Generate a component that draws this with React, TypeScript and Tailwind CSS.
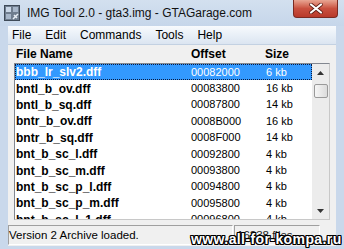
import React from "react";

const rows: [string, string, string][] = [
  ["bbb_lr_slv2.dff", "00082000", "6 kb"],
  ["bntl_b_ov.dff", "00083800", "16 kb"],
  ["bntl_b_sq.dff", "00087800", "14 kb"],
  ["bntr_b_ov.dff", "0008B000", "16 kb"],
  ["bntr_b_sq.dff", "0008F000", "14 kb"],
  ["bnt_b_sc_l.dff", "00092800", "4 kb"],
  ["bnt_b_sc_m.dff", "00093800", "4 kb"],
  ["bnt_b_sc_p_l.dff", "00094800", "4 kb"],
  ["bnt_b_sc_p_m.dff", "00095800", "4 kb"],
  ["bnt_b_sc_l_1.dff", "00096800", "4 kb"],
];

function AppIcon() {
  return (
    <svg width="16" height="16" viewBox="0 0 16 16">
      <rect x="0.5" y="0.5" width="15" height="15" fill="#6f7d8e" stroke="#3f4a58" />
      <rect x="2" y="2" width="5" height="5" fill="#c9d6e6" />
      <rect x="9" y="2" width="5" height="5" fill="#a7b6c9" />
      <rect x="2" y="9" width="5" height="5" fill="#a7b6c9" />
      <path d="M9 14 L14 9 M10 10 L13 13" stroke="#e8eef6" strokeWidth="1.5" />
    </svg>
  );
}

export default function App() {
  return (
    <div className="relative w-[344px] h-[249px] overflow-hidden bg-[#c9d8eb] font-['Liberation_Sans',Arial,sans-serif] text-black flex flex-col">
      {/* Title bar */}
      <div className="h-[26px] flex items-start shrink-0 bg-gradient-to-b from-[#d3e0ef] to-[#c6d6ea]">
        <div className="ml-[4px] mt-[5px]">
          <AppIcon />
        </div>
        <div className="ml-[7px] mt-[6px] text-[12px] leading-[14px] text-[#111] whitespace-nowrap">
          IMG Tool 2.0 - gta3.img - GTAGarage.com
        </div>
        <div className="ml-auto mr-[6px] w-[45px] h-[18px] rounded-b-[4px] border border-t-0 border-[#7a2a22] bg-gradient-to-b from-[#e8a593] via-[#c9503f] to-[#b8392a] flex items-center justify-center">
          <svg width="14" height="11" viewBox="0 0 14 11">
            <path d="M2 1.5 L12 9.5 M12 1.5 L2 9.5" stroke="#5a1a12" strokeWidth="3.6" strokeLinecap="round" />
            <path d="M2 1.5 L12 9.5 M12 1.5 L2 9.5" stroke="#ffffff" strokeWidth="2.2" strokeLinecap="round" />
          </svg>
        </div>
      </div>

      <div className="flex-1 mx-[8px] flex flex-col">
        {/* Menu bar */}
        <div className="h-[19px] shrink-0 flex items-center pl-[4px] gap-[14px] text-[12px] bg-gradient-to-b from-[#f7fafd] to-[#dbe5f1] border-b border-[#c3d1e2]">
          <span>File</span>
          <span>Edit</span>
          <span>Commands</span>
          <span>Tools</span>
          <span>Help</span>
        </div>

        {/* Client */}
        <div className="flex-1 bg-[#f0f0f0] flex flex-col">
          {/* Header */}
          <div className="h-[18px] shrink-0 flex items-center text-[12px] font-bold pl-[8px]">
            <span className="w-[175px]">File Name</span>
            <span className="w-[74px]">Offset</span>
            <span>Size</span>
          </div>

          {/* List */}
          <div className="mx-[6px] h-[157px] shrink-0 bg-white border border-t-[#828790] border-l-[#828790] border-r-[#c8c8c8] border-b-[#c8c8c8] flex overflow-hidden">
            <div className="flex-1 flex flex-col overflow-hidden">
              {rows.map(([n, o, s], i) => (
                <div
                  key={n}
                  className={
                    i === 0
                      ? "h-[16.4px] shrink-0 flex items-center pl-[1px] bg-[#3399ff] text-white outline-1 outline-dotted outline-[#0a1a40] -outline-offset-1"
                      : "h-[16.4px] shrink-0 flex items-center pl-[1px]"
                  }
                >
                  <span className="w-[175px] text-[12px] font-bold leading-[14px] whitespace-nowrap">{n}</span>
                  <span className="w-[75px] text-[11px] leading-[13px]">{o}</span>
                  <span className="text-[11px] leading-[13px] whitespace-nowrap">{s}</span>
                </div>
              ))}
            </div>
            {/* Scrollbar */}
            <div className="w-[17px] shrink-0 bg-[#ececec] flex flex-col items-center">
              <div className="h-[17px] flex items-center justify-center">
                <svg width="7" height="4" viewBox="0 0 7 4">
                  <path d="M0 4 L3.5 0 L7 4 Z" fill="#333" />
                </svg>
              </div>
              <div className="mt-[3px] w-[14px] h-[14px] rounded-[2px] border border-[#9a9a9a] bg-gradient-to-r from-[#f6f6f6] to-[#dcdcdc]" />
              <div className="flex-1" />
              <div className="h-[17px] flex items-center justify-center">
                <svg width="7" height="4" viewBox="0 0 7 4">
                  <path d="M0 0 L3.5 4 L7 0 Z" fill="#333" />
                </svg>
              </div>
            </div>
          </div>

          <div className="h-[5px] shrink-0" />

          {/* Status bar */}
          <div className="h-[20px] shrink-0 flex text-[11.5px] leading-[14px]">
            <div className="w-[225px] border border-t-[#a0a0a0] border-l-[#a0a0a0] border-r-white border-b-white flex items-center whitespace-nowrap">
              Version 2 Archive loaded.
            </div>
            <div className="ml-[1px] w-[86px] border border-t-[#a0a0a0] border-l-[#a0a0a0] border-r-white border-b-white flex items-center pl-[2px] text-[#222] whitespace-nowrap">
              16238 files
            </div>
            <div className="flex-1 flex items-end justify-end pr-[1px] pb-[1px]">
              <svg width="11" height="11" viewBox="0 0 11 11">
                <g fill="#a9a9a9">
                  <rect x="8" y="2" width="2" height="2" />
                  <rect x="5" y="5" width="2" height="2" />
                  <rect x="8" y="5" width="2" height="2" />
                  <rect x="2" y="8" width="2" height="2" />
                  <rect x="5" y="8" width="2" height="2" />
                  <rect x="8" y="8" width="2" height="2" />
                </g>
              </svg>
            </div>
          </div>
        </div>
      </div>
      <div className="h-[3px] shrink-0" />

      {/* Watermark */}
      <div className="absolute left-[191px] top-[231px] whitespace-nowrap text-[14px] font-bold leading-[16px] tracking-[0.4px] text-white [text-shadow:1px_1px_0_#000,-1px_-1px_0_#000,1px_-1px_0_#000,-1px_1px_0_#000,0_1px_0_#000,1px_0_0_#000,0_-1px_0_#000,-1px_0_0_#000]">
        www.all-for-kompa.ru
      </div>
    </div>
  );
}
